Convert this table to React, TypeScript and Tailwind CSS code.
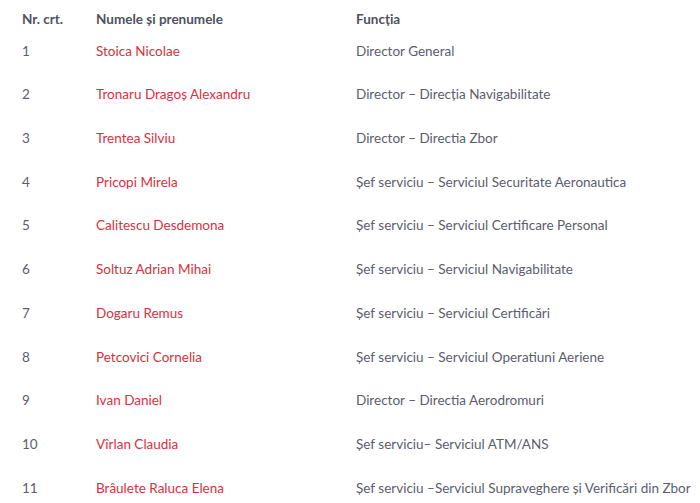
const rows: [string, string, string][] = [
  ['1', 'Stoica Nicolae', 'Director General'],
  ['2', 'Tronaru Dragoș Alexandru', 'Director – Direcția Navigabilitate'],
  ['3', 'Trentea Silviu', 'Director – Directia Zbor'],
  ['4', 'Pricopi Mirela', 'Șef serviciu – Serviciul Securitate Aeronautica'],
  ['5', 'Calitescu Desdemona', 'Șef serviciu – Serviciul Certificare Personal'],
  ['6', 'Soltuz Adrian Mihai', 'Șef serviciu – Serviciul Navigabilitate'],
  ['7', 'Dogaru Remus', 'Șef serviciu – Serviciul Certificări'],
  ['8', 'Petcovici Cornelia', 'Șef serviciu – Serviciul Operatiuni Aeriene'],
  ['9', 'Ivan Daniel', 'Director – Directia Aerodromuri'],
  ['10', 'Vîrlan Claudia', 'Șef serviciu– Serviciul ATM/ANS'],
  ['11', 'Brâulete Raluca Elena', 'Șef serviciu –Serviciul Supraveghere și Verificări din Zbor'],
]

export default function App() {
  return (
    <main className="min-h-screen bg-white pt-[9px] text-[13.5px] text-[#5b5d6b] font-['Lato',sans-serif]">
      <div className="grid grid-cols-[96px_260px_1fr] h-[20px] items-center font-bold text-[#4f5160]">
        <div className="pl-[22px]">Nr. crt.</div>
        <div>Numele și prenumele</div>
        <div>Funcția</div>
      </div>
      {rows.map(([nr, name, role]) => (
        <div key={nr} className="grid grid-cols-[96px_260px_1fr] h-[43.7px] items-center">
          <div className="pl-[22px]">{nr}</div>
          <div className="text-[#d8313d]">{name}</div>
          <div>{role}</div>
        </div>
      ))}
    </main>
  )
}
